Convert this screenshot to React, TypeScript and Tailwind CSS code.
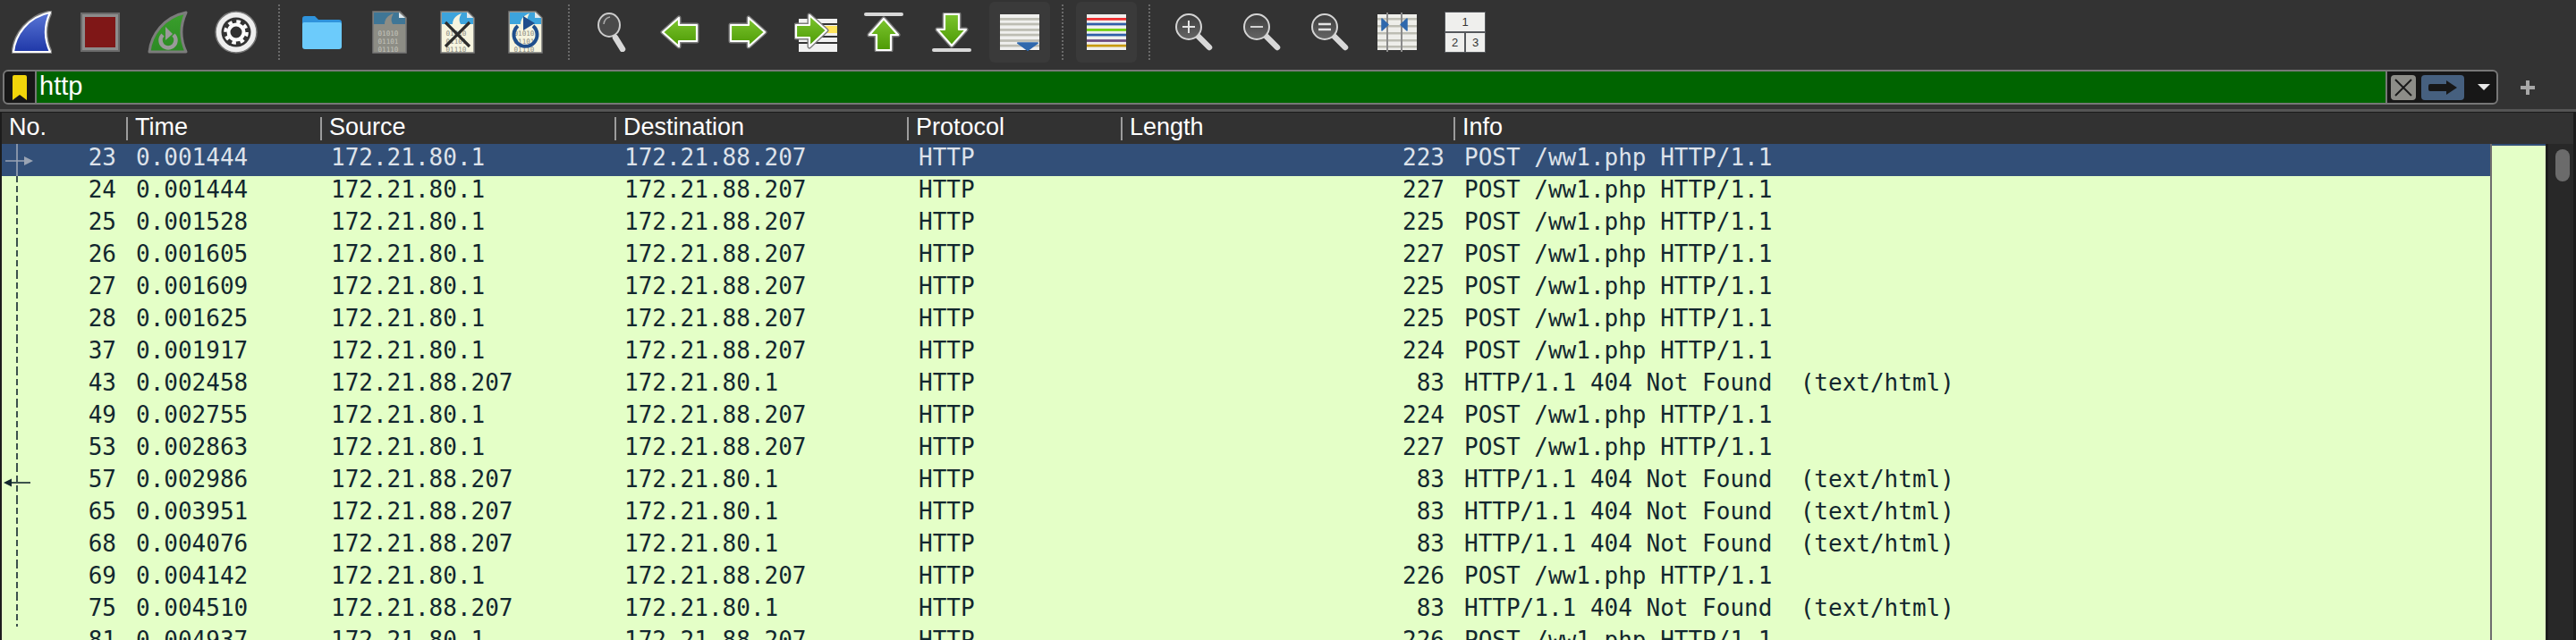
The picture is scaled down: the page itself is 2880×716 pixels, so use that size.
import React from 'react';

const REQ = 'POST /ww1.php HTTP/1.1';
const RES = 'HTTP/1.1 404 Not Found  (text/html)';
const A = '172.21.80.1';
const B = '172.21.88.207';

const packets = [
  { no: 23, time: '0.001444', src: A, dst: B, len: 223, info: REQ },
  { no: 24, time: '0.001444', src: A, dst: B, len: 227, info: REQ },
  { no: 25, time: '0.001528', src: A, dst: B, len: 225, info: REQ },
  { no: 26, time: '0.001605', src: A, dst: B, len: 227, info: REQ },
  { no: 27, time: '0.001609', src: A, dst: B, len: 225, info: REQ },
  { no: 28, time: '0.001625', src: A, dst: B, len: 225, info: REQ },
  { no: 37, time: '0.001917', src: A, dst: B, len: 224, info: REQ },
  { no: 43, time: '0.002458', src: B, dst: A, len: 83, info: RES },
  { no: 49, time: '0.002755', src: A, dst: B, len: 224, info: REQ },
  { no: 53, time: '0.002863', src: A, dst: B, len: 227, info: REQ },
  { no: 57, time: '0.002986', src: B, dst: A, len: 83, info: RES },
  { no: 65, time: '0.003951', src: B, dst: A, len: 83, info: RES },
  { no: 68, time: '0.004076', src: B, dst: A, len: 83, info: RES },
  { no: 69, time: '0.004142', src: A, dst: B, len: 226, info: REQ },
  { no: 75, time: '0.004510', src: B, dst: A, len: 83, info: RES },
  { no: 81, time: '0.004937', src: A, dst: B, len: 226, info: REQ },
];

const COLS = 'grid grid-cols-[139px_217px_329px_327px_239px_372px_1fr]';

// three layers: grey rim, white rim, fill
function Rim({ d, fill }: { d: string; fill: string }) {
  return (
    <>
      <path d={d} fill="none" stroke="#7c7c7c" strokeWidth="5" strokeLinejoin="round" />
      <path d={d} fill={fill} stroke="#fff" strokeWidth="2.2" strokeLinejoin="round" />
    </>
  );
}

function Grad({ id, from, to }: { id: string; from: string; to: string }) {
  return (
    <defs>
      <linearGradient id={id} x1="0" y1="0" x2="0" y2="1">
        <stop offset="0" stopColor={from} />
        <stop offset="1" stopColor={to} />
      </linearGradient>
    </defs>
  );
}

function SharkFin() {
  return (
    <svg width="45" height="48" viewBox="0 0 45 48">
      <Grad id="fin" from="#5a76d6" to="#1f38a8" />
      <Rim d="M2 46 C4 27 18 7 43 2 C36 17 37 33 43 46 Z" fill="url(#fin)" />
    </svg>
  );
}

function StopIcon() {
  return (
    <div className="w-[44px] h-[44px] border-2 border-[#6a6a6a] bg-[#8c8c8c] p-[3px]">
      <div className="w-full h-full bg-[#7f1717]" />
    </div>
  );
}

function RestartFin() {
  return (
    <svg width="45" height="48" viewBox="0 0 45 48">
      <Grad id="finGreen" from="#3aa02c" to="#2c8a24" />
      <path d="M2 46 C4 27 18 7 43 2 C36 17 37 33 43 46 Z" fill="url(#finGreen)" stroke="#7c7c7c" strokeWidth="3" strokeLinejoin="round" />
      <path d="M17 27 A8.5 8.5 0 1 0 29 27" fill="none" stroke="#9a9a9a" strokeWidth="4.5" />
      <path d="M20 18 L20 33 L28 26 Z" fill="#9a9a9a" />
    </svg>
  );
}

function GearIcon() {
  return (
    <svg width="48" height="48" viewBox="0 0 48 48">
      <circle cx="24" cy="24" r="23" fill="#eee" stroke="#777" strokeWidth="1.5" />
      <circle cx="24" cy="24" r="16.5" fill="#333" />
      <circle cx="24" cy="24" r="8.5" fill="none" stroke="#fff" strokeWidth="4" />
      <circle cx="24" cy="24" r="12" fill="none" stroke="#fff" strokeWidth="3.6" strokeDasharray="4.6 4.82" />
    </svg>
  );
}

function FolderIcon() {
  return (
    <svg width="44" height="37" viewBox="0 0 44 37">
      <path d="M0 3 Q0 0 3 0 H14 L18 4 H41 Q44 4 44 7 V14 H0 Z" fill="#2f93dc" />
      <path d="M0 9 Q0 7 2 7 H42 Q44 7 44 9 V34 Q44 37 41 37 H3 Q0 37 0 34 Z" fill="#6ccbfb" />
    </svg>
  );
}

function BinaryLines({ color }: { color: string }) {
  return (
    <g fontFamily="'DejaVu Sans Mono', monospace" fontSize="7.6" fill={color}>
      <text x="6.5" y="28">01010</text>
      <text x="6.5" y="37">01101</text>
      <text x="6.5" y="46">01110</text>
    </g>
  );
}

function FileIcon({ kind }: { kind: 'capture' | 'close' | 'reload' }) {
  const grey = kind === 'capture';
  const body = grey ? '#8d8d85' : '#f6f4df';
  const head = grey ? '#3f7696' : '#3da4dc';
  return (
    <svg width="39" height="48" viewBox="0 0 39 48">
      <path d="M1 1 H31 L38 8 V47 H1 Z" fill={body} stroke="#777" strokeWidth="1.5" />
      <path d="M2 2 H30 V8 H37 V15 H2 Z" fill={head} />
      <path d="M30 2 L37 8 H30 Z" fill="#dfe9ee" />
      <path d="M14 15 C14 9 18 5 24 3 C21 8 21 11 23 15 Z" fill={body} />
      <BinaryLines color={grey ? '#c4c4bc' : '#8a8a80'} />
      {kind === 'close' && <path d="M6 13 L33 40 M33 13 L6 40" stroke="#2c2c2c" strokeWidth="3.2" />}
      {kind === 'reload' && (
        <>
          <path d="M11 17 A13 13 0 1 0 28 17" fill="none" stroke="#1f4e8c" strokeWidth="4" />
          <path d="M17 6 L30 14 L17 22 Z" fill="#1f4e8c" />
        </>
      )}
    </svg>
  );
}

function FindIcon() {
  return (
    <svg width="33" height="44" viewBox="0 0 33 44">
      <ellipse cx="13" cy="14" rx="12" ry="13" fill="#4a4a4a" stroke="#ccc" strokeWidth="2" />
      <path d="M7 13 Q8 6 14 5" fill="none" stroke="#aaa" strokeWidth="1.5" />
      <path d="M20 28 L28 41" stroke="#d8d8d8" strokeWidth="6.5" strokeLinecap="round" />
    </svg>
  );
}

function ArrowIcon({ id, d, w = 44, h = 38, children }: { id: string; d: string; w?: number; h?: number; children?: React.ReactNode }) {
  return (
    <svg width={w} height={h} viewBox={`0 0 ${w} ${h}`}>
      <Grad id={id} from="#7cc52e" to="#4d9a05" />
      {children}
      <Rim d={d} fill={`url(#${id})`} />
    </svg>
  );
}

function GoToIcon() {
  return (
    <ArrowIcon id="goGrad" w={48} h={44} d="M2 14 H17 V3 L36 20 L17 38 V28 H2 Z">
      {[7, 14, 21, 28, 35].map((y) => (
        <rect key={y} x="5" y={y} width="43" height="5" fill="#f0f0f0" />
      ))}
      <rect x="34" y="15" width="14" height="8" fill="#ffe45c" />
      <rect x="5" y="39" width="43" height="5" fill="#f0f0f0" />
    </ArrowIcon>
  );
}

function StripeIcon({ colors, children }: { colors?: string[]; children?: React.ReactNode }) {
  const ys = [5, 12, 20, 27, 35, 42];
  const list = colors ?? ['#bdbdb3', '#bdbdb3', '#bdbdb3', '#bdbdb3', '#bdbdb3', '#bdbdb3'];
  return (
    <svg width="44" height="41" viewBox="0 0 44 51" preserveAspectRatio="none">
      <rect x="0" y="0" width="44" height="50" fill="#f0f0ee" />
      <rect x="0" y="50" width="44" height="1" fill="#222" />
      {list.map((c, i) => (
        <rect key={i} x="0" y={ys[i]} width="44" height="3.4" fill={c} />
      ))}
      {children}
    </svg>
  );
}

function ZoomIcon({ glyph }: { glyph: 'in' | 'out' | 'eq' }) {
  return (
    <svg width="42" height="42" viewBox="0 0 42 42">
      <Grad id={`zoom${glyph}`} from="#3c3c3c" to="#666" />
      <path d="M26 26 L38 38" stroke="#d8d8d8" strokeWidth="6.5" strokeLinecap="round" />
      <circle cx="15" cy="15" r="14" fill={`url(#zoom${glyph})`} stroke="#d4d4d4" strokeWidth="2" />
      {glyph === 'in' && <path d="M8 15 H22 M15 8 V22" stroke="#e4e4e4" strokeWidth="2" />}
      {glyph === 'out' && <path d="M8 15 H22" stroke="#d4d4d4" strokeWidth="2" />}
      {glyph === 'eq' && <path d="M8 12 H22 M8 18 H22" stroke="#e4e4e4" strokeWidth="2.4" />}
    </svg>
  );
}

function ResizeIcon() {
  return (
    <svg width="44" height="44" viewBox="0 0 44 44">
      <rect x="0" y="2" width="44" height="40" fill="#eeeeea" />
      {[6, 14, 22, 30, 37].map((y) => (
        <rect key={y} x="0" y={y} width="44" height="2.5" fill="#bdbdb3" />
      ))}
      <path d="M11 0 V44 M27 0 V44" stroke="#8a8a8a" strokeWidth="2" />
      <path d="M5 7 L12 13.5 L5 20 Z M33 7 L26 13.5 L33 20 Z" fill="#2f68ad" stroke="#2f68ad" strokeWidth="1.5" strokeLinejoin="round" />
    </svg>
  );
}

function LayoutIcon() {
  return (
    <div className="w-[46px] h-[46px] border border-[#55585c] bg-[#55585c] grid grid-cols-2 gap-[2px] font-['Liberation_Sans',sans-serif] text-[13px] text-[#333]">
      <div className="col-span-2 bg-[#efefed] flex items-center justify-center">1</div>
      <div className="bg-[#efefed] flex items-center justify-center">2</div>
      <div className="bg-[#efefed] flex items-center justify-center">3</div>
    </div>
  );
}

function Dots({ className }: { className: string }) {
  return <div className={`w-0 h-[62px] border-l-2 border-dotted border-[#6a6a6a] ${className}`} />;
}

function Toolbar() {
  return (
    <div className="h-[78px] shrink-0 flex items-center bg-[#333333] pb-[6px]">
      <div className="ml-[13px]"><SharkFin /></div>
      <div className="ml-[32px]"><StopIcon /></div>
      <div className="ml-[31px]"><RestartFin /></div>
      <div className="ml-[30px]"><GearIcon /></div>
      <Dots className="ml-[23px]" />
      <div className="ml-[25px]"><FolderIcon /></div>
      <div className="ml-[34px]"><FileIcon kind="capture" /></div>
      <div className="ml-[37px]"><FileIcon kind="close" /></div>
      <div className="ml-[37px]"><FileIcon kind="reload" /></div>
      <Dots className="ml-[28px]" />
      <div className="ml-[31px]"><FindIcon /></div>
      <div className="ml-[37px]"><ArrowIcon id="prevGrad" d="M3 19 L21 3 V11 H41 V29 H21 V35 Z" /></div>
      <div className="ml-[32px]"><ArrowIcon id="nextGrad" d="M41 19 L23 3 V11 H3 V29 H23 V35 Z" /></div>
      <div className="ml-[30px]"><GoToIcon /></div>
      <div className="ml-[30px]">
        <ArrowIcon id="firstGrad" w={44} h={44} d="M22 7 L38 25 H30 V42 H14 V25 H6 Z">
          <path d="M2 2 H42" stroke="#d8d8d8" strokeWidth="4" strokeLinecap="round" />
        </ArrowIcon>
      </div>
      <div className="ml-[32px]">
        <ArrowIcon id="lastGrad" w={44} h={44} d="M22 37 L38 19 H30 V2 H14 V19 H6 Z">
          <path d="M2 42 H42" stroke="#d8d8d8" strokeWidth="4" strokeLinecap="round" />
        </ArrowIcon>
      </div>
      <div className="ml-[20px] w-[68px] h-[68px] rounded-[6px] bg-[#3a3a3a] flex items-center justify-center">
        <StripeIcon>
          <path d="M20 40 H42 L31 50 Z" fill="#2f68ad" stroke="#2f68ad" strokeWidth="2" strokeLinejoin="round" />
        </StripeIcon>
      </div>
      <Dots className="ml-[13px]" />
      <div className="ml-[14px] w-[68px] h-[68px] rounded-[6px] bg-[#3a3a3a] flex items-center justify-center">
        <StripeIcon colors={['#ef2b2d', '#2f5ea8', '#6fd10c', '#2f5ea8', '#6b4a7e', '#c89a10']} />
      </div>
      <Dots className="ml-[13px]" />
      <div className="ml-[28px]"><ZoomIcon glyph="in" /></div>
      <div className="ml-[34px]"><ZoomIcon glyph="out" /></div>
      <div className="ml-[34px]"><ZoomIcon glyph="eq" /></div>
      <div className="ml-[32px]"><ResizeIcon /></div>
      <div className="ml-[31px]"><LayoutIcon /></div>
    </div>
  );
}

function FilterBar() {
  return (
    <div className="h-[44px] shrink-0 flex items-start bg-[#333333] pl-[3px]">
      <div className="w-[2790px] h-[39px] flex rounded-[6px] border-2 border-[#777] bg-[#171717] overflow-hidden">
        <div className="w-[36px] shrink-0 flex items-center justify-center border-r-2 border-[#777]">
          <svg width="16" height="28" viewBox="0 0 16 28">
            <path d="M0 2 Q0 0 2 0 H14 Q16 0 16 2 V28 L8 22 L0 28 Z" fill="#f2d50a" />
          </svg>
        </div>
        <div className="flex-1 bg-[#006400] text-white text-[29px] leading-[33px] pl-[3px] font-['Liberation_Sans',sans-serif]">http</div>
        <div className="w-[124px] shrink-0 flex items-center border-l-2 border-[#777] pl-[4px]">
          <div className="w-[28px] h-[28px] rounded-[4px] bg-[#8d8d88] flex items-center justify-center">
            <svg width="20" height="20" viewBox="0 0 20 20"><path d="M1 1 L19 19 M19 1 L1 19" stroke="#1a1a1a" strokeWidth="2" /></svg>
          </div>
          <div className="ml-[6px] w-[48px] h-[28px] rounded-[4px] bg-[#46607f] flex items-center justify-center">
            <svg width="32" height="16" viewBox="0 0 32 16"><path d="M2 4 H20 V0 L32 8 L20 16 V12 H2 Q0 12 0 10 V6 Q0 4 2 4 Z" fill="#171717" /></svg>
          </div>
          <svg className="ml-[15px]" width="14" height="7" viewBox="0 0 14 7"><path d="M0 0 H14 L7 7 Z" fill="#e8e8e8" /></svg>
        </div>
      </div>
      <svg className="ml-[25px] mt-[12px]" width="16" height="16" viewBox="0 0 16 16"><path d="M8 0 V16 M0 8 H16" stroke="#a8a8a8" strokeWidth="4" /></svg>
    </div>
  );
}

function HeaderCell({ label, first }: { label: string; first?: boolean }) {
  return (
    <div className={`h-[26px] flex items-center pb-[3px] ${first ? 'pl-[8px]' : 'border-l-2 border-[#9c9c9c] pl-[8px]'}`}>
      {label}
    </div>
  );
}

function Relation({ index }: { index: number }) {
  // conversation marks in the No. column
  return (
    <svg className="absolute left-0 top-0" width="40" height="36" viewBox="0 0 40 36">
      {index === 0 && <path d="M17 0 V36 M4 19 H26" stroke="#9aa4b4" strokeWidth="1.6" />}
      {index === 0 && <path d="M25 14 L35 19 L25 24 Z" fill="#9aa4b4" />}
      {index > 0 && index < 15 && <path d="M17 0 V36" stroke="#12272e" strokeWidth="1.6" strokeDasharray="7 4" />}
      {index === 10 && <path d="M10 19 H32" stroke="#12272e" strokeWidth="1.6" />}
      {index === 10 && <path d="M2 19 L11 14.5 V23.5 Z" fill="#12272e" />}
    </svg>
  );
}

function PacketRow({ packet, index }: { packet: (typeof packets)[number]; index: number }) {
  const selected = index === 0;
  return (
    <div className={`${COLS} h-[36px] shrink-0 leading-[31px] whitespace-pre ${selected ? 'bg-[#324f78] text-[#dde2ea]' : 'text-[#12272e]'}`}>
      <div className="relative text-right pr-[11px]">
        <Relation index={index} />
        {packet.no}
      </div>
      <div className="pl-[11px]">{packet.time}</div>
      <div className="pl-[12px]">{packet.src}</div>
      <div className="pl-[11px]">{packet.dst}</div>
      <div className="pl-[13px]">HTTP</div>
      <div className="text-right pr-[10px]">{packet.len}</div>
      <div className="pl-[12px]">{packet.info}</div>
    </div>
  );
}

export default function App() {
  return (
    <div className="w-[2880px] h-[716px] overflow-hidden flex flex-col bg-[#333333]">
      <Toolbar />
      <FilterBar />
      <div className="h-[3px] shrink-0 bg-[#555555]" />
      <div className="flex-1 min-h-0 flex flex-col border-l-2 border-r-[3px] border-[#1c1c1c] border-t-[1px]">
        <div className={`${COLS} h-[35px] shrink-0 items-center bg-[#323232] text-white text-[27px] font-['Liberation_Sans',sans-serif]`}>
          {['No.', 'Time', 'Source', 'Destination', 'Protocol', 'Length', 'Info'].map((h, i) => (
            <HeaderCell key={h} label={h} first={i === 0} />
          ))}
        </div>
        <div className="flex-1 min-h-0 flex overflow-hidden">
          <div className="w-[2782px] shrink-0 flex flex-col bg-[#e4ffc7] text-[26px] font-['DejaVu_Sans_Mono',monospace] overflow-hidden">
            {packets.map((p, i) => (
              <PacketRow key={p.no} packet={p} index={i} />
            ))}
          </div>
          <div className="w-[62px] shrink-0 border-l-2 border-[#6e6e6e] bg-[#e4ffc7]">
            <div className="h-[2px] bg-[#324f78]" />
          </div>
          <div className="flex-1 border-l-[3px] border-[#1c1c1c] bg-[#282828] pt-[6px] pl-[8px]">
            <div className="w-[16px] h-[36px] rounded-full bg-[#6b6b6b]" />
          </div>
        </div>
      </div>
    </div>
  );
}
